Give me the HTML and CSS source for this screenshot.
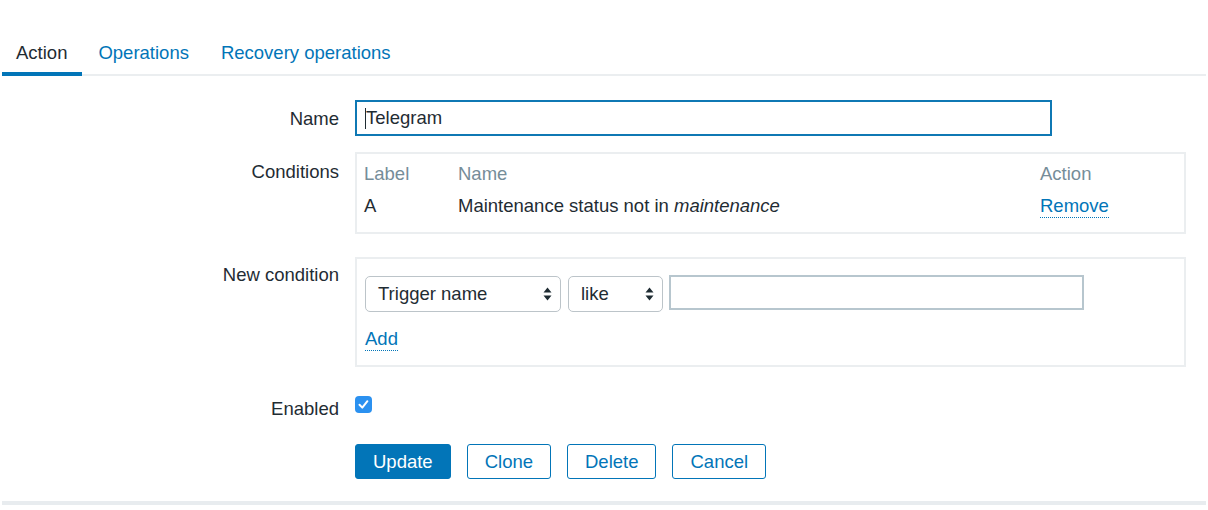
FILE: index.html
```html
<!DOCTYPE html>
<html>
<head>
<meta charset="utf-8">
<link rel="stylesheet" href="styles.css">
</head>
<body>
<div class="page">
  <div class="tabs">
    <span class="tab active">Action</span>
    <span class="tab">Operations</span>
    <span class="tab">Recovery operations</span>
  </div>
  <div class="form">
    <div class="row row-name">
      <div class="label">Name</div>
      <div class="field">
        <div class="text-input focused"><span class="caret"></span>Telegram</div>
      </div>
    </div>
    <div class="row row-cond">
      <div class="label">Conditions</div>
      <div class="field">
        <div class="box cond-box">
          <div class="trow thead">
            <div class="c1">Label</div>
            <div class="c2">Name</div>
            <div class="c3">Action</div>
          </div>
          <div class="trow">
            <div class="c1">A</div>
            <div class="c2">Maintenance status not in <em>maintenance</em></div>
            <div class="c3"><a class="link">Remove</a></div>
          </div>
        </div>
      </div>
    </div>
    <div class="row row-new">
      <div class="label">New condition</div>
      <div class="field">
        <div class="box new-box">
          <div class="controls">
            <div class="select sel-trigger">Trigger name
              <svg class="arrows" width="9" height="14" viewBox="0 0 9 14"><path d="M4.5 0.5L8.5 5.5H0.5Z M4.5 13.5L8.5 8.5H0.5Z" fill="#1f2c33"/></svg>
            </div>
            <div class="select sel-like">like
              <svg class="arrows" width="9" height="14" viewBox="0 0 9 14"><path d="M4.5 0.5L8.5 5.5H0.5Z M4.5 13.5L8.5 8.5H0.5Z" fill="#1f2c33"/></svg>
            </div>
            <div class="value-input"></div>
          </div>
          <a class="link add">Add</a>
        </div>
      </div>
    </div>
    <div class="row row-enabled">
      <div class="label">Enabled</div>
      <div class="field">
        <span class="checkbox">
          <svg width="17" height="17" viewBox="0 0 17 17"><path d="M4.5 8.8L7.3 11.6L12.4 5.2" fill="none" stroke="#fff" stroke-width="2" stroke-linecap="round" stroke-linejoin="round"/></svg>
        </span>
      </div>
    </div>
    <div class="row row-buttons">
      <div class="label"></div>
      <div class="field buttons">
        <button class="btn primary">Update</button>
        <button class="btn">Clone</button>
        <button class="btn">Delete</button>
        <button class="btn">Cancel</button>
      </div>
    </div>
  </div>
</div>
</body>
</html>
```

FILE: styles.css
```css
* { box-sizing: border-box; }
html, body { margin: 0; padding: 0; background: #fff; }
body {
  font-family: "Liberation Sans", Arial, Helvetica, sans-serif;
  font-size: 18.5px;
  color: #1f2c33;
}
.page {
  margin: 0 2px;
  width: 1204px;
  height: 505px;
  border-bottom: 4px solid #e8ecef;
}
.tabs {
  display: flex;
  padding-top: 42px;
  border-bottom: 2px solid #ebeef0;
  height: 76px;
}
.tab {
  display: block;
  height: 34px;
  line-height: 21px;
  padding: 0 16px 0 16px;
  color: #0275b8;
  margin-bottom: -2px;
}
.tab.active {
  color: #1f2c33;
  padding: 0 15px 0 14px;
  border-bottom: 4px solid #0275b8;
}
.form { padding-top: 24px; }
.row {
  display: grid;
  grid-template-columns: 337px 1fr;
  column-gap: 16px;
}
.label {
  text-align: right;
  line-height: 21px;
}
.row-name .label { padding-top: 8px; }
.text-input {
  width: 697px;
  height: 36px;
  border: 2px solid #0f78b4;
  padding: 0 8px;
  line-height: 32px;
  display: flex;
  align-items: center;
}
.caret {
  display: inline-block;
  width: 1px;
  height: 21px;
  background: #1f2c33;
}
.row-cond { margin-top: 16px; }
.row-cond .label { padding-top: 9px; }
.box {
  width: 831px;
  border: 2px solid #ebeef0;
}
.cond-box {
  height: 82px;
  padding: 9px 7px 0 7px;
}
.trow {
  display: flex;
  line-height: 21px;
  height: 32px;
}
.thead { color: #768d99; }
.c1 { width: 94px; }
.c2 { width: 582px; }
.c3 { width: 120px; }
.link {
  color: #0275b8;
  border-bottom: 1px dotted #0275b8;
  padding-bottom: 1px;
}
.row-new { margin-top: 23px; }
.row-new .label { padding-top: 7px; }
.new-box {
  height: 110px;
  padding: 16px 8px 0 8px;
}
.controls {
  display: flex;
  align-items: flex-start;
}
.select {
  position: relative;
  height: 36px;
  border: 1px solid #bcc4c9;
  border-radius: 5px;
  line-height: 34px;
  padding-left: 12px;
  margin-top: 1px;
}
.sel-trigger { width: 196px; }
.sel-like { width: 95px; margin-left: 7px; }
.arrows {
  position: absolute;
  right: 8px;
  top: 10px;
}
.value-input {
  width: 415px;
  height: 35px;
  margin-left: 6px;
  border: 2px solid #b7c6ce;
}
.add {
  display: inline-block;
  margin-top: 16px;
  line-height: 21px;
}
.row-enabled { margin-top: 29px; }
.row-enabled .label { padding-top: 2px; }
.checkbox {
  display: block;
  width: 17px;
  height: 17px;
  background: #2b91f0;
  border-radius: 4px;
  margin-top: 0;
}
.checkbox svg { display: block; }
.row-buttons { margin-top: 25px; }
.buttons {
  display: flex;
  gap: 16px;
}
.btn {
  height: 35px;
  font-family: inherit;
  font-size: 18.5px;
  color: #0275b8;
  background: #fff;
  border: 1px solid #0275b8;
  border-radius: 3px;
  padding: 0 17px;
  margin: 0;
}
.btn.primary {
  background: #0275b8;
  color: #fff;
}
```
